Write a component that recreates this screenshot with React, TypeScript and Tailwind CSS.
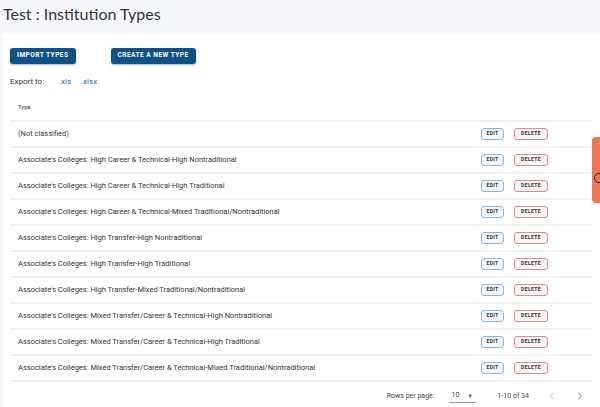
import { ChevronLeft, ChevronRight } from 'lucide-react'

const types = [
  '(Not classified)',
  "Associate's Colleges: High Career & Technical-High Nontraditional",
  "Associate's Colleges: High Career & Technical-High Traditional",
  "Associate's Colleges: High Career & Technical-Mixed Traditional/Nontraditional",
  "Associate's Colleges: High Transfer-High Nontraditional",
  "Associate's Colleges: High Transfer-High Traditional",
  "Associate's Colleges: High Transfer-Mixed Traditional/Nontraditional",
  "Associate's Colleges: Mixed Transfer/Career & Technical-High Nontraditional",
  "Associate's Colleges: Mixed Transfer/Career & Technical-High Traditional",
  "Associate's Colleges: Mixed Transfer/Career & Technical-Mixed Traditional/Nontraditional",
]

export default function App() {
  return (
    <div className="relative h-[407px] w-[600px] overflow-hidden bg-[#f7f8fc] font-['Roboto',sans-serif] text-[#222]">
      <h1 className="h-[34px] pl-[3px] pt-[1px] font-['Lato',sans-serif] text-[16px] font-normal leading-[26px] text-[#333]">
        Test : Institution Types
      </h1>

      <div className="ml-[3px] h-[373px] bg-white pl-[7px] pr-[8px] pt-[14px]">
        <div className="flex gap-[35px]">
          <button className="h-[16px] rounded-[3px] bg-[#0f5189] px-[7px] text-[6.5px] font-bold tracking-[0.5px] text-white shadow-[0_1px_2px_rgba(0,0,0,0.3)]">
            IMPORT TYPES
          </button>
          <button className="h-[16px] rounded-[3px] bg-[#0f5189] px-[7px] text-[6.5px] font-bold tracking-[0.5px] text-white shadow-[0_1px_2px_rgba(0,0,0,0.3)]">
            CREATE A NEW TYPE
          </button>
        </div>

        <div className="mt-[11px] flex items-center text-[8px] leading-[14px]">
          <span className="w-[49px] text-[#333]">Export to:</span>
          <a className="w-[22px] text-[#2b6cb0]">.xls</a>
          <a className="text-[#2b6cb0]">.xlsx</a>
        </div>

        <div className="mt-[9px] flex h-[24px] items-start border-b-2 border-[#f0f0f0] pl-[8px] pt-[4px] text-[6px] text-[#333]">
          Type
        </div>

        {types.map((t) => (
          <div key={t} className="flex h-[26px] items-center border-b-2 border-[#f0f0f0] pl-[8px] text-[7.5px]">
            <span className="flex-1 text-[#333]">{t}</span>
            <div className="flex w-[111px] gap-[10px]">
              <button className="h-[12px] w-[23px] rounded-[3px] border-[1.5px] border-[#8fb4dd] bg-[#f3f6fa] text-[5px] font-bold tracking-[0.4px] text-[#333]">
                EDIT
              </button>
              <button className="h-[12px] w-[34px] rounded-[3px] border-[1.5px] border-[#e38787] bg-[#f7f4f4] text-[5px] font-bold tracking-[0.4px] text-[#333]">
                DELETE
              </button>
            </div>
          </div>
        ))}

        <div className="flex h-[28px] items-center justify-end text-[7px] text-[#444]">
          <span>Rows per page:</span>
          <div className="ml-[15px] flex h-[14px] w-[27px] items-center border-b border-[#999] pl-[2px]">
            <span>10</span>
            <span className="ml-[8px] text-[6px] text-[#666]">▼</span>
          </div>
          <span className="ml-[21px]">1-10 of 34</span>
          <ChevronLeft className="ml-[17px] h-[12px] w-[12px] text-[#aaa]" strokeWidth={1.5} />
          <ChevronRight className="ml-[16px] mr-[6px] h-[12px] w-[12px] text-[#444]" strokeWidth={1.5} />
        </div>
      </div>

      <div className="absolute left-[592px] top-[137px] h-[66px] w-[12px] overflow-hidden rounded-l-[4px] bg-[#f07651]">
        <div className="absolute left-[2px] top-[36px] h-[10px] w-[10px] rounded-full border-[1.5px] border-[#222]" />
      </div>
    </div>
  )
}
